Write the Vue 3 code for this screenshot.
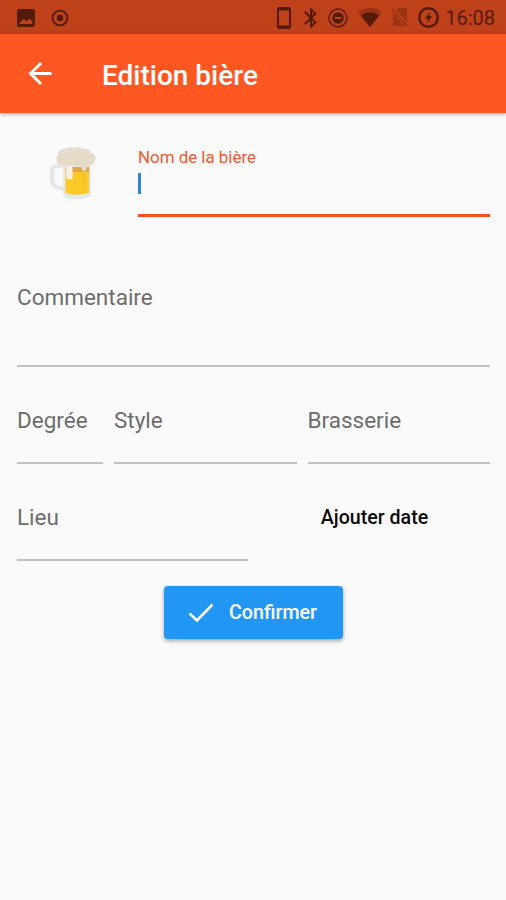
<template>
  <div class="page">
    <!-- Barre de statut -->
    <div class="status-bar">
      <svg class="s-image" viewBox="0 0 18 18">
        <path fill-rule="evenodd" d="M2 0h14a2 2 0 0 1 2 2v14a2 2 0 0 1-2 2H2a2 2 0 0 1-2-2V2a2 2 0 0 1 2-2zM2.5 15h13v-2l-3-3.5-2.5 3L6.5 10l-4 4z" />
      </svg>
      <svg class="s-target" viewBox="0 0 18 18">
        <circle cx="9" cy="9" r="7.4" fill="none" stroke="currentColor" stroke-width="1.9" />
        <circle cx="9" cy="9" r="3.2" />
      </svg>
      <div class="status-right">
        <svg class="s-phone" viewBox="0 0 14 22">
          <path fill-rule="evenodd" d="M2 0h10a2 2 0 0 1 2 2v18a2 2 0 0 1-2 2H2a2 2 0 0 1-2-2V2a2 2 0 0 1 2-2zM2 3.5v15h10v-15z" />
        </svg>
        <svg class="s-bluetooth" viewBox="5 2 14 20">
          <path d="M17.71 7.71L12 2h-1v7.59L6.41 5 5 6.41 10.59 12 5 17.59 6.41 19 11 14.41V22h1l5.71-5.71-4.3-4.29 4.3-4.29zM13 5.83l1.88 1.88L13 9.59V5.83zm1.88 10.46L13 18.17v-3.76l1.88 1.88z" />
        </svg>
        <svg class="s-dnd" viewBox="0 0 20 20">
          <circle cx="10" cy="10" r="9" fill="none" stroke="currentColor" stroke-width="1.4" />
          <path fill-rule="evenodd" d="M10 4.2a5.8 5.8 0 1 1 0 11.6 5.8 5.8 0 0 1 0-11.6zM6.8 9v2h6.4V9z" />
        </svg>
        <svg class="s-wifi" viewBox="0 0 24 19">
          <path opacity=".35" d="M0 4.2C7-1.4 17-1.4 24 4.2L12 19z" />
          <path d="M2.8 7.6C8.2 3.6 15.8 3.6 21.2 7.6L12 19z" />
        </svg>
        <svg class="s-sim" viewBox="0 0 16 19">
          <g opacity=".36">
            <path d="M6 0h7.5A1.5 1.5 0 0 1 15 1.5v12.8L4.2 2zM1 5.2L12.600 18H2.500A1.500 1.500 0 0 1 1 16.500z" />
            <path d="M.3 1.600L15.500 18.300" fill="none" stroke="currentColor" stroke-width="1.500" />
          </g>
        </svg>
        <svg class="s-battery" viewBox="0 0 20 20">
          <circle cx="10" cy="10" r="8.8" fill="none" stroke="currentColor" stroke-width="2.3" />
          <path d="M11.3 4.5L6.5 11h3l-.8 4.5 4.8-6.7h-3z" />
        </svg>
        <span class="time">16:08</span>
      </div>
    </div>

    <!-- Barre de titre -->
    <header class="app-bar">
      <button class="back" aria-label="Retour">
        <svg viewBox="4 4 16 16">
          <path d="M20 11H7.83l5.59-5.59L12 4l-8 8 8 8 1.41-1.41L7.83 13H20v-2z" />
        </svg>
      </button>
      <h1>Edition bière</h1>
    </header>

    <!-- Formulaire -->
    <form class="form" @submit.prevent>
      <div class="name-row">
        <svg class="beer" viewBox="0 0 48 54">
          <path d="M15 19H7.500Q3 19 3 24v9q0 6 6 7.500l6 1.500" fill="none" stroke="#e4e6e7" stroke-width="4.500" />
          <path d="M14 13h28v34q0 5-14 5t-14-5z" fill="#e5e7e8" />
          <path d="M16.500 21h23.500v25q-11 3.500-23.500 0z" fill="#fcc927" />
          <path d="M16.500 20h23.500v5H16.500z" fill="#dfa642" />
          <path d="M34 24v4l3 2M33 30l3 4-2 4 3 3" fill="none" stroke="#e9b12c" stroke-width="1" />
          <path d="M17 17h6.500v14q-3 3-6 0z" fill="#f5f1e8" />
          <path d="M9 17Q6 12 9 7q0-5 7-5 4-3 9-1 5-2 9 1 6-1 8 4 6 2 4 7-1 5-6 5-2 1-3 5-2 3-4 0l-1-5q-6 3-11 0-5 3-12-1z" fill="#e5dac8" />
          <path d="M12 7q4-5 9-2 6-5 12 0 6-2 8 3" fill="none" stroke="#e9dfcf" stroke-width="2" />
        </svg>
        <div class="field focused">
          <label>Nom de la bière</label>
          <span class="caret"></span>
        </div>
      </div>

      <div class="field comment">
        <label>Commentaire</label>
      </div>

      <div class="row details">
        <div v-for="f in details" :key="f.name" class="field" :class="f.name">
          <label>{{ f.label }}</label>
        </div>
      </div>

      <div class="row place">
        <div class="field">
          <label>Lieu</label>
        </div>
        <button type="button" class="date">Ajouter date</button>
      </div>

      <button class="confirm">
        <svg viewBox="0 0 26 20">
          <path d="M1.5 10.5l7.5 7L24.5 1.5" fill="none" stroke="currentColor" stroke-width="2.6" />
        </svg>
        Confirmer
      </button>
    </form>
  </div>
</template>

<script setup>
const details = [
  { name: "degree", label: "Degrée" },
  { name: "style", label: "Style" },
  { name: "brewery", label: "Brasserie" },
];
</script>

<style>
body {
  margin: 0;
  background: #fafafa;
}
</style>

<style scoped>
.page {
  height: 900px;
  overflow: hidden;
  background: #fafafa;
  font-family: Roboto, "Noto Sans", sans-serif;
}

button {
  border: none;
  padding: 0;
  background: none;
  font-family: inherit;
  font-weight: 500;
  cursor: pointer;
}

svg {
  display: block;
  flex: none;
  fill: currentColor;
}

.status-bar {
  display: flex;
  align-items: center;
  box-sizing: border-box;
  height: 34px;
  padding: 1px 11px 0 16.5px;
  background: #bf411a;
  color: #541b0b;
}

.s-image {
  width: 18px;
  height: 18px;
}

.s-target {
  width: 18px;
  height: 18px;
  margin-left: 16px;
}

.status-right {
  display: flex;
  align-items: center;
  margin-left: auto;
}

.s-phone {
  width: 14px;
  height: 22px;
}

.s-bluetooth {
  width: 14px;
  height: 20px;
  margin-left: 13px;
}

.s-dnd {
  width: 20px;
  height: 20px;
  margin-left: 10px;
}

.s-wifi {
  width: 24px;
  height: 19px;
  margin-left: 10px;
}

.s-sim {
  width: 16px;
  height: 19px;
  margin-left: 10px;
}

.s-battery {
  width: 21px;
  height: 21px;
  margin-left: 10px;
}

.time {
  margin-left: 6px;
  font-size: 20px;
  line-height: 24px;
}

.app-bar {
  display: flex;
  align-items: center;
  height: 79px;
  padding-left: 28px;
  background: #ff5722;
  color: #fff;
  box-shadow: 0 1px 4px rgba(0, 0, 0, 0.35);
}

.back {
  color: inherit;
}

.back svg {
  width: 24px;
  height: 23px;
}

.app-bar h1 {
  margin: 4px 0 0 50px;
  font-size: 28px;
  font-weight: 500;
  line-height: 32px;
}

.form {
  display: flex;
  flex-direction: column;
  padding: 34px 16px 0 17px;
}

.name-row {
  display: flex;
}

.beer {
  width: 48px;
  height: 54px;
  margin: 0 41px 0 32px;
}

.field {
  box-sizing: border-box;
  height: 57px;
  border-bottom: 2px solid #c2c2c2;
}

.field label {
  display: block;
  color: #6d6d6d;
  font-size: 22.5px;
  line-height: 27px;
}

.focused {
  flex: 1;
  height: 70px;
  border-bottom: 3px solid #f4511e;
}

.focused label {
  color: #f1592e;
  font-size: 16.9px;
  line-height: 20px;
}

.caret {
  display: block;
  width: 3px;
  height: 21px;
  margin-top: 6px;
  background: #2f86dc;
}

.comment {
  height: 83px;
  margin-top: 67px;
}

.row {
  display: flex;
  gap: 11px;
  margin-top: 40px;
}

.degree {
  width: 86px;
}

.style,
.brewery {
  flex: 1;
}

.place .field,
.date {
  flex: 1;
}

.date {
  height: 27px;
  color: #0a0a0a;
  font-size: 19.6px;
}

.confirm {
  display: flex;
  align-items: center;
  align-self: center;
  box-sizing: border-box;
  width: 179px;
  height: 53px;
  margin-top: 25px;
  padding-left: 24px;
  border-radius: 4px;
  background: #2196f3;
  color: #fff;
  font-size: 19.68px;
  box-shadow: 0 2px 4px rgba(0, 0, 0, 0.35);
}

.confirm svg {
  width: 26px;
  height: 20px;
  margin-right: 15px;
}
</style>
